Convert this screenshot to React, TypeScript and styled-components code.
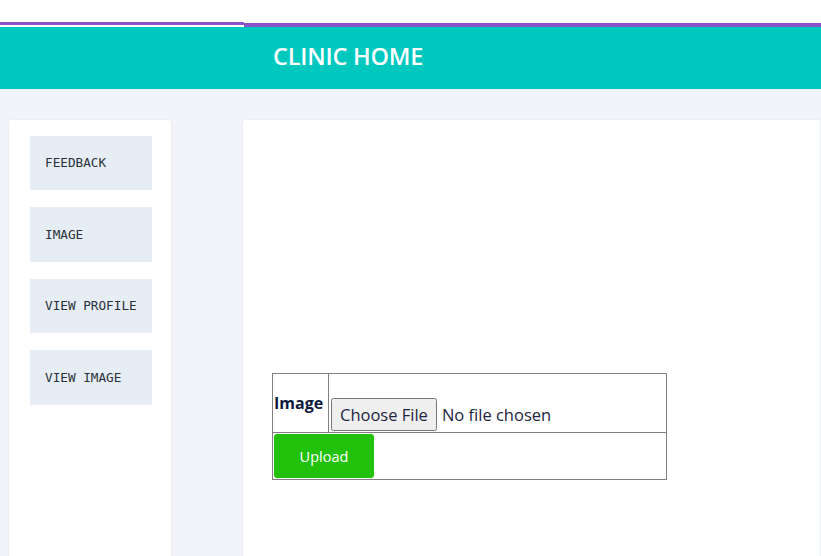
import React from "react";
import styled, { createGlobalStyle } from "styled-components";

const GlobalStyle = createGlobalStyle`
  html, body {
    margin: 0;
    padding: 0;
    background: #f3f4f9;
    font-family: "Open Sans", "Noto Sans", sans-serif;
    overflow: hidden;
  }
  * {
    box-sizing: border-box;
  }
`;

const Page = styled.div`
  min-height: 556px;
  background: #f3f4f9;
`;

const TopStrip = styled.div`
  height: 27px;
  background: #ffffff;
  display: flex;
  align-items: flex-start;
  padding-top: 22px;
`;

const Progress = styled.div<{ $w?: number; $h: number; $top: number }>`
  height: ${(p) => p.$h}px;
  margin-top: ${(p) => p.$top}px;
  background: #8852c8;
  ${(p) => (p.$w ? `width: ${p.$w}px; flex: none;` : "flex: 1;")}
`;

const Header = styled.header`
  height: 62px;
  background: #00c8bf;
  display: flex;
  align-items: center;
  padding: 0 0 5px 273px;
`;

const Title = styled.h1`
  margin: 0;
  color: #ffffff;
  font-size: 23.5px;
  font-weight: 600;
  letter-spacing: -0.2px;
`;

const Body = styled.div`
  display: flex;
  align-items: flex-start;
  gap: 70px;
  padding: 30px 0 0 8px;
`;

const Sidebar = styled.nav`
  width: 164px;
  height: 460px;
  flex: none;
  background: #ffffff;
  border: 1px solid #eceef5;
  border-radius: 4px;
  padding: 15.5px 0 0 21px;
  display: flex;
  flex-direction: column;
  gap: 17px;
`;

const NavButton = styled.div`
  width: 122px;
  height: 54.5px;
  background: #e6edf4;
  display: flex;
  align-items: center;
  padding-left: 15px;
  font-family: "DejaVu Sans Mono", "Liberation Mono", monospace;
  font-size: 12.7px;
  color: #2a313a;
`;

const Main = styled.main`
  flex: 1;
  height: 460px;
  background: #ffffff;
  border: 1px solid #eceef5;
  border-radius: 4px 0 0 0;
  padding: 253px 0 0 29px;
`;

const Table = styled.table`
  width: 395px;
  border-collapse: collapse;
  border: 1px solid #808080;
`;

const Th = styled.th`
  border: 1px solid #808080;
  padding: 1px;
  font-size: 16px;
  font-weight: 700;
  color: #0c1a3d;
  width: 56px;
  vertical-align: middle;
  text-align: left;
`;

const Td = styled.td<{ $top?: boolean }>`
  border: 1px solid #808080;
  padding: 1px;
  height: ${(p) => (p.$top ? "59px" : "47px")};
  vertical-align: ${(p) => (p.$top ? "bottom" : "middle")};
`;

const FileInput = styled.input`
  font-family: "Open Sans", "Noto Sans", sans-serif;
  font-size: 16.5px;
  color: #1d2540;
  margin: 0 0 0 1px;

  &::file-selector-button {
    font-family: inherit;
    font-size: 16.5px;
    padding: 3px 7px;
    margin-right: 5px;
    color: #1d2540;
  }
`;

const UploadButton = styled.button`
  width: 100px;
  height: 44px;
  border: none;
  border-radius: 3px;
  background: #22c10c;
  color: #ffffff;
  font-family: "Open Sans", "Noto Sans", sans-serif;
  font-size: 14.5px;
  font-weight: 500;
  cursor: pointer;
`;

const links = ["FEEDBACK", "IMAGE", "VIEW PROFILE", "VIEW IMAGE"];

export default function App() {
  return (
    <Page>
      <GlobalStyle />
      <TopStrip>
        <Progress $w={244} $h={3} $top={0} />
        <Progress $h={4} $top={1} />
      </TopStrip>
      <Header>
        <Title>CLINIC HOME</Title>
      </Header>
      <Body>
        <Sidebar>
          {links.map((l) => (
            <NavButton key={l}>{l}</NavButton>
          ))}
        </Sidebar>
        <Main>
          <Table>
            <tbody>
              <tr>
                <Th>Image</Th>
                <Td $top>
                  <FileInput type="file" />
                </Td>
              </tr>
              <tr>
                <Td colSpan={2}>
                  <UploadButton>Upload</UploadButton>
                </Td>
              </tr>
            </tbody>
          </Table>
        </Main>
      </Body>
    </Page>
  );
}
